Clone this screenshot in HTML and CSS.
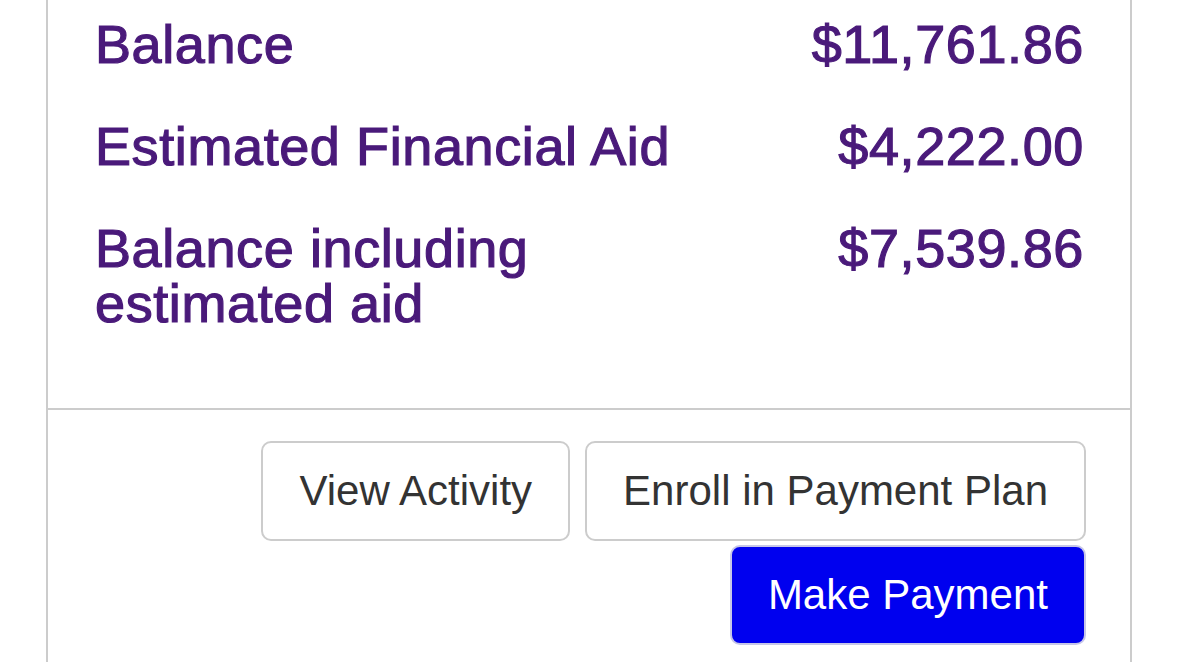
FILE: index.html
```html
<!DOCTYPE html>
<html>
<head>
<meta charset="UTF-8">
<title>Account Balance</title>
<link rel="stylesheet" href="styles.css">
</head>
<body>

<div class="card">
	<div class="summary">
		<div class="row">
			<div class="label">Balance</div>
			<div class="amount">$11,761.86</div>
		</div>
		<div class="row">
			<div class="label">Estimated Financial Aid</div>
			<div class="amount">$4,222.00</div>
		</div>
		<div class="row">
			<div class="label">Balance including estimated aid</div>
			<div class="amount">$7,539.86</div>
		</div>
	</div>

	<div class="actions">
		<button type="button" class="btn">View Activity</button>
		<button type="button" class="btn">Enroll in Payment Plan</button>
		<button type="button" class="btn primary">Make Payment</button>
	</div>
</div>

</body>
</html>
```

FILE: styles.css
```css
* { box-sizing: border-box; }
body { margin: 0; background: #fff; font-family: "Liberation Sans", Arial, sans-serif; }

.card {
	margin-left: 46px;
	width: 1086px;
	min-height: 662px;
	border-left: 2px solid #cccccc;
	border-right: 2px solid #cccccc;
}

.summary { padding: 17px 46px 77px 47px; }

.row {
	display: flex;
	justify-content: space-between;
	gap: 24px;
	margin-bottom: 47px;
	color: #4a1a7a;
	font-size: 54px;
	line-height: 55px;
	letter-spacing: 0.6px;
	-webkit-text-stroke: 1.2px #4a1a7a;
}
.row:last-child { margin-bottom: 0; }
.label { max-width: 620px; }
.amount { white-space: nowrap; }

.actions {
	border-top: 2px solid #cccccc;
	padding: 31px 44px 20px 46px;
	display: flex;
	flex-wrap: wrap;
	justify-content: flex-end;
	column-gap: 15px;
	row-gap: 4px;
}

.btn {
	height: 100px;
	padding: 0 36px;
	border: 2px solid #cccccc;
	border-radius: 10px;
	background: #fff;
	color: #333333;
	font-family: "Liberation Sans", Arial, sans-serif;
	font-size: 42px;
}
.btn.primary {
	background: #0000ef;
	border-color: #c6c6e8;
	color: #fff;
}
```
